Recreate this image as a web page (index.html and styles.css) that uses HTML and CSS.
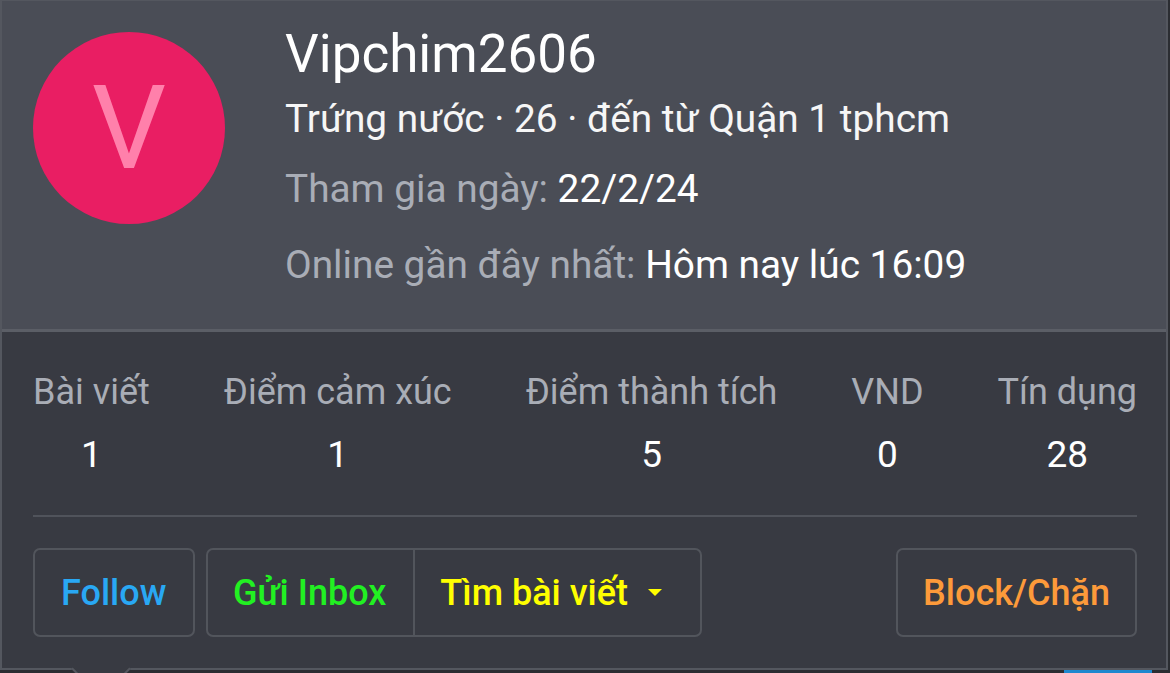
FILE: index.html
```html
<!DOCTYPE html>
<html lang="vi">
<head>
<meta charset="utf-8">
<title>Vipchim2606</title>
<link rel="stylesheet" href="styles.css">
</head>
<body>
<div class="card">
  <div class="head">
    <div class="avatar"><span>V</span></div>
    <div class="info">
      <div class="name">Vipchim2606</div>
      <div class="blurb">Trứng nước · 26 · đến từ Quận 1 tphcm</div>
      <div class="meta meta-join"><span class="lbl">Tham gia ngày:</span> 22/2/24</div>
      <div class="meta meta-online"><span class="lbl">Online gần đây nhất:</span> Hôm nay lúc 16:09</div>
    </div>
  </div>
  <div class="body">
    <div class="stats">
      <div class="stat"><div class="stat-lbl">Bài viết</div><div class="stat-val">1</div></div>
      <div class="stat"><div class="stat-lbl">Điểm cảm xúc</div><div class="stat-val">1</div></div>
      <div class="stat"><div class="stat-lbl">Điểm thành tích</div><div class="stat-val">5</div></div>
      <div class="stat"><div class="stat-lbl">VND</div><div class="stat-val">0</div></div>
      <div class="stat"><div class="stat-lbl">Tín dụng</div><div class="stat-val">28</div></div>
    </div>
    <div class="sep"></div>
    <div class="actions">
      <a class="btn btn-follow">Follow</a>
      <div class="group">
        <a class="btn btn-inbox">Gửi Inbox</a>
        <a class="btn btn-find">Tìm bài viết <span class="caret"></span></a>
      </div>
      <a class="btn btn-block">Block/Chặn</a>
    </div>
  </div>
  <div class="arrow"></div>
</div>
<div class="under"><div class="under-tab"></div></div>
</body>
</html>
```

FILE: styles.css
```css
html, body {
  margin: 0;
  padding: 0;
  overflow: hidden;
  height: 673px;
}
body {
  background: #2b2d32;
  font-family: Roboto, "Noto Sans", sans-serif;
  color: #ffffff;
}
.card {
  position: relative;
  box-sizing: border-box;
  width: 1168px;
  height: 670px;
  border: 2px solid #54575f;
  border-top-width: 1px;
  background: #383a42;
  display: flex;
  flex-direction: column;
}
.head {
  box-sizing: border-box;
  height: 331px;
  background: #4a4d56;
  border-bottom: 3px solid #5b5e66;
  display: flex;
  padding: 21px 0 0 31px;
}
.avatar {
  flex: none;
  width: 192px;
  height: 192px;
  margin-top: 10px;
  border-radius: 50%;
  background: #e91e63;
  display: flex;
  align-items: center;
  justify-content: center;
}
.avatar span {
  font-size: 117px;
  line-height: 1;
  color: #ff80ab;
}
.info {
  margin-left: 60px;
  display: flex;
  flex-direction: column;
}
.name {
  font-size: 53px;
  line-height: 64px;
  color: #ffffff;
}
.blurb {
  font-size: 38.8px;
  line-height: 48px;
  margin-top: 9px;
  color: #f6f6f6;
}
.meta {
  font-size: 38.8px;
  line-height: 48px;
  color: #ffffff;
}
.meta-join { margin-top: 22px; }
.meta-online { margin-top: 28px; }
.lbl { color: #a9adb6; }

.body {
  flex: 1;
  padding: 0 29px 0 31px;
  display: flex;
  flex-direction: column;
}
.stats {
  display: flex;
  justify-content: space-between;
  padding-top: 36px;
}
.stat {
  text-align: center;
}
.stat-lbl {
  font-size: 36px;
  line-height: 48px;
  color: #a9adb6;
}
.stat-val {
  font-size: 37px;
  line-height: 48px;
  margin-top: 15px;
  color: #ffffff;
}
.sep {
  height: 2px;
  background: #50535b;
  margin-top: 36px;
}
.actions {
  display: flex;
  margin-top: 31px;
  gap: 11px;
}
.btn {
  box-sizing: border-box;
  height: 89px;
  display: flex;
  align-items: center;
  font-size: 36px;
  font-weight: 500;
  line-height: 48px;
  padding: 0 26px;
  border: 2px solid #52555c;
  border-radius: 7px;
  white-space: nowrap;
}
.btn-follow { color: #29a8f4; width: 162px; padding-left: 26px; }
.group {
  display: flex;
  border: 2px solid #52555c;
  border-radius: 7px;
  height: 89px;
  box-sizing: border-box;
}
.group .btn {
  border: none;
  height: 85px;
  border-radius: 0;
}
.btn-inbox {
  color: #22f022;
  border-right: 2px solid #52555c !important;
  padding: 0 27px 0 25px;
}
.btn-find {
  color: #ffff00;
  padding: 0 38px 0 25px;
}
.caret {
  display: inline-block;
  width: 0;
  height: 0;
  margin-left: 20px;
  border-left: 7px solid transparent;
  border-right: 7px solid transparent;
  border-top: 7px solid #ffff00;
}
.btn-block {
  margin-left: auto;
  padding: 0 25px;
  color: #fd9a3a;
}
.arrow {
  position: absolute;
  left: 78px;
  bottom: -22px;
  width: 40px;
  height: 40px;
  background: #383a42;
  border-right: 2px solid #54575f;
  border-bottom: 2px solid #54575f;
  transform: rotate(45deg);
}
.under {
  height: 3px;
  display: flex;
}
.under-tab {
  margin-left: 1064px;
  width: 88px;
  background: #1e88cf;
}
```
